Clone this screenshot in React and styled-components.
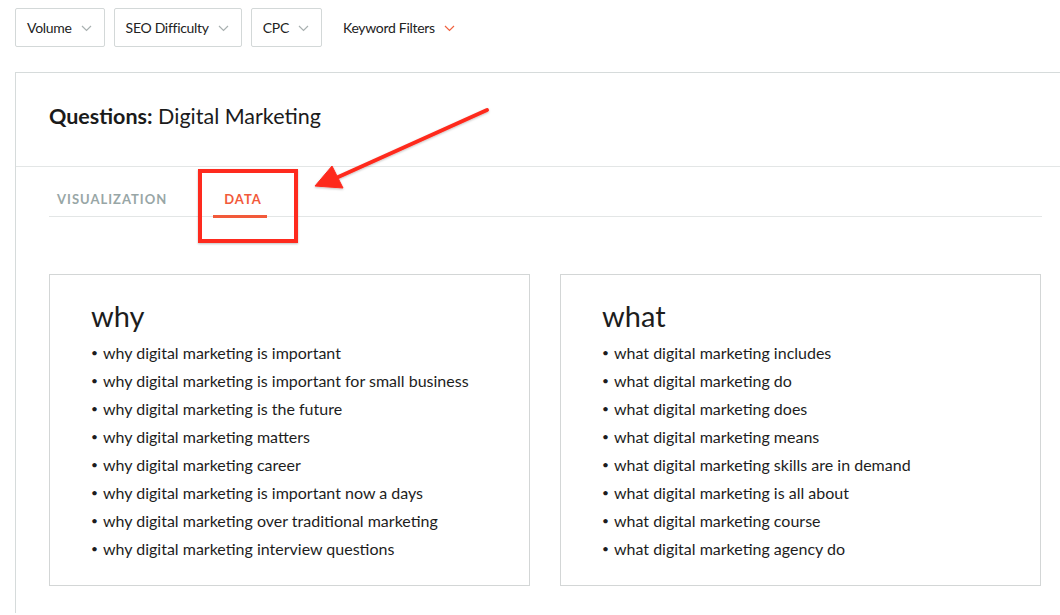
import React from "react";
import styled, {createGlobalStyle} from "styled-components";

const GlobalStyle = createGlobalStyle`
    html, body {
        margin: 0;
        padding: 0;
        background: #fff;
        overflow: hidden;
    }
    body {
        font-family: Lato, "Noto Sans", sans-serif;
        color: #222;
        width: 1060px;
        height: 615px;
        position: relative;
    }
`;

const whyList = [
    "why digital marketing is important",
    "why digital marketing is important for small business",
    "why digital marketing is the future",
    "why digital marketing matters",
    "why digital marketing career",
    "why digital marketing is important now a days",
    "why digital marketing over traditional marketing",
    "why digital marketing interview questions",
];

const whatList = [
    "what digital marketing includes",
    "what digital marketing do",
    "what digital marketing does",
    "what digital marketing means",
    "what digital marketing skills are in demand",
    "what digital marketing is all about",
    "what digital marketing course",
    "what digital marketing agency do",
];

const Chevron = ({color}) => (
    <svg width="11" height="7" viewBox="0 0 11 7" fill="none">
        <path d="M1 1l4.5 4.5L10 1" stroke={color} strokeWidth="1.2"/>
    </svg>
);

const App = () => {
    return (
        <>
            <GlobalStyle/>
            <FilterBar>
                <FilterButton>Volume <Chevron color="#a9b1b1"/></FilterButton>
                <FilterButton>SEO Difficulty <Chevron color="#a9b1b1"/></FilterButton>
                <FilterButton>CPC <Chevron color="#a9b1b1"/></FilterButton>
                <FilterButton plain>Keyword Filters <Chevron color="#f0623f"/></FilterButton>
            </FilterBar>
            <Panel>
                <PanelHeader>
                    <Title><strong>Questions:</strong> Digital Marketing</Title>
                </PanelHeader>
                <Tabs>
                    <Tab>VISUALIZATION</Tab>
                    <Tab active>DATA</Tab>
                </Tabs>
                <Cards>
                    <Card>
                        <CardTitle>why</CardTitle>
                        <List>
                            {whyList.map((item) => <Item key={item}>{item}</Item>)}
                        </List>
                    </Card>
                    <Card>
                        <CardTitle>what</CardTitle>
                        <List>
                            {whatList.map((item) => <Item key={item}>{item}</Item>)}
                        </List>
                    </Card>
                </Cards>
            </Panel>
            <HighlightBox/>
            <Arrow width="200" height="100" viewBox="0 0 200 100">
                <defs>
                    <filter id="sh" x="-20%" y="-20%" width="140%" height="140%">
                        <feDropShadow dx="0" dy="1" stdDeviation="1" floodColor="#000" floodOpacity="0.25"/>
                    </filter>
                </defs>
                <g filter="url(#sh)" fill="#fe2a1e" stroke="#fe2a1e">
                    <line x1="187" y1="12" x2="36" y2="80" strokeWidth="4" strokeLinecap="round"/>
                    <polygon points="15,88 32,68 43,90" strokeWidth="1" strokeLinejoin="round"/>
                </g>
            </Arrow>
        </>
    );
};

const FilterBar = styled.div`
    display: flex;
    align-items: center;
    gap: 9px;
    padding: 8px 15px 0;
    height: 39px;
`;

const FilterButton = styled.div`
    display: flex;
    align-items: center;
    gap: 9px;
    height: 39px;
    box-sizing: border-box;
    padding: 0 12px 0 11px;
    border: 1px solid ${p => p.plain ? "transparent" : "#d3d8d8"};
    border-radius: 2px;
    font-size: 14px;
    letter-spacing: -0.3px;
    color: #222;
    svg { margin-top: 1px; }
`;

const Panel = styled.div`
    margin: 25px 0 0 15px;
    width: 1060px;
    border: 1px solid #d6dbdb;
    border-right: none;
    border-bottom: none;
    height: 540px;
`;

const PanelHeader = styled.div`
    height: 94px;
    box-sizing: border-box;
    display: flex;
    align-items: center;
    padding: 0 33px 7px;
    border-bottom: 1px solid #e3e6e6;
`;

const Title = styled.h1`
    margin: 0;
    font-size: 21.5px;
    font-weight: 400;
    color: #1b1b1b;
    strong { font-weight: 700; }
`;

const Tabs = styled.div`
    display: flex;
    margin: 0 34px 0 33px;
    height: 49px;
    border-bottom: 1px solid #e3e6e6;
    align-items: stretch;
`;

const Tab = styled.div`
    display: flex;
    align-items: center;
    padding: ${p => p.active ? "15px 5px 0 11px" : "15px 8px 0"};
    margin-right: 38px;
    font-size: 13px;
    font-weight: 700;
    letter-spacing: 1px;
    color: ${p => p.active ? "#f25a3a" : "#98a6a6"};
    border-bottom: 3px solid ${p => p.active ? "#f25a3a" : "transparent"};
    margin-bottom: -2px;
`;

const Cards = styled.div`
    display: grid;
    grid-template-columns: 481px 481px;
    gap: 30px;
    padding: 57px 34px 0 33px;
`;

const Card = styled.div`
    border: 1px solid #d3d6d6;
    height: 312px;
    box-sizing: border-box;
    padding: 24px 41px 0;
`;

const CardTitle = styled.h2`
    margin: 0 0 5px;
    font-size: 29px;
    font-weight: 400;
    line-height: 34px;
    color: #1d1d1d;
`;

const List = styled.ul`
    list-style: none;
    margin: 0;
    padding: 0;
`;

const Item = styled.li`
    display: flex;
    align-items: center;
    height: 28px;
    font-size: 16px;
    color: #1d1d1d;
    &::before {
        content: "•";
        font-size: 12px;
        line-height: 1;
        margin: 2px 5px 0 0;
    }
`;

const HighlightBox = styled.div`
    position: absolute;
    left: 198px;
    top: 169px;
    width: 100px;
    height: 74px;
    box-sizing: border-box;
    border: 4px solid #fe2a1e;
    box-shadow: 0 1px 2px rgba(0, 0, 0, 0.25);
`;

const Arrow = styled.svg`
    position: absolute;
    left: 300px;
    top: 98px;
`;

export default App;
